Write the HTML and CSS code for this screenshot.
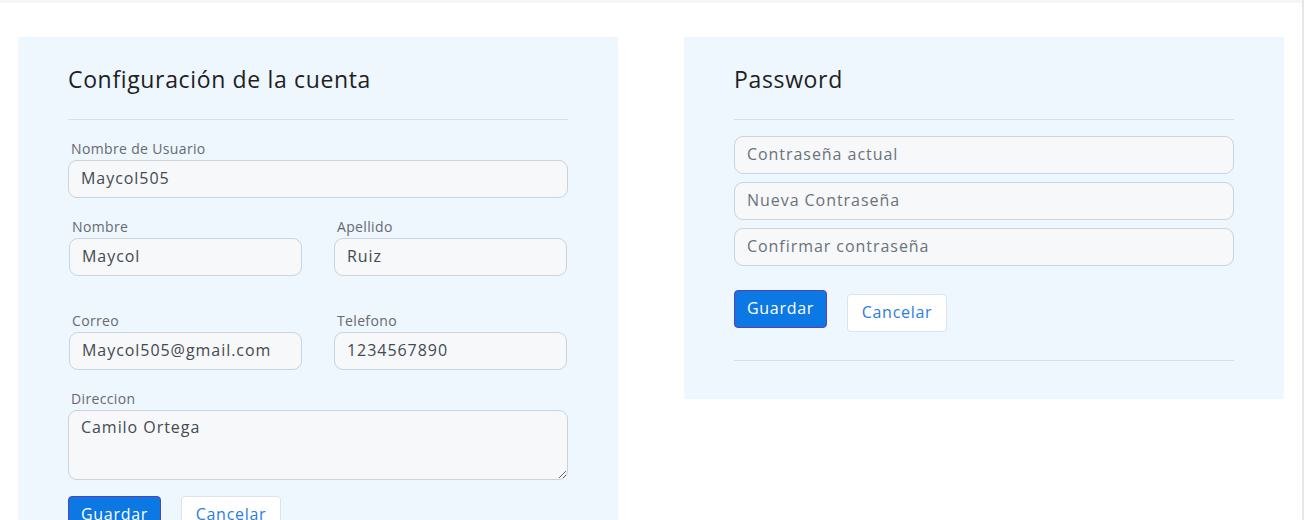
FILE: index.html
```html
<!DOCTYPE html>
<html lang="es">
<head>
<meta charset="utf-8">
<title>Configuración</title>
<link rel="stylesheet" href="styles.css">
</head>
<body>
<div class="page">
  <div class="topband"></div>
  <div class="cards">
    <section class="card card-left">
      <h4 class="card-title">Configuración de la cuenta</h4>
      <hr class="divider">
      <div class="field">
        <label class="label">Nombre de Usuario</label>
        <input class="input" type="text" value="Maycol505">
      </div>
      <div class="row row-first">
        <div class="field">
          <label class="label">Nombre</label>
          <input class="input" type="text" value="Maycol">
        </div>
        <div class="field">
          <label class="label">Apellido</label>
          <input class="input" type="text" value="Ruiz">
        </div>
      </div>
      <div class="row row-second">
        <div class="field">
          <label class="label">Correo</label>
          <input class="input" type="text" value="Maycol505@gmail.com">
        </div>
        <div class="field">
          <label class="label">Telefono</label>
          <input class="input" type="text" value="1234567890">
        </div>
      </div>
      <div class="field field-dir">
        <label class="label">Direccion</label>
        <textarea class="input textarea">Camilo Ortega</textarea>
      </div>
      <div class="actions actions-left">
        <button class="btn btn-primary">Guardar</button>
        <button class="btn btn-light">Cancelar</button>
      </div>
    </section>
    <section class="card card-right">
      <h4 class="card-title">Password</h4>
      <hr class="divider">
      <div class="pw-fields">
        <input class="input" type="password" placeholder="Contraseña actual">
        <input class="input" type="password" placeholder="Nueva Contraseña">
        <input class="input" type="password" placeholder="Confirmar contraseña">
      </div>
      <div class="actions actions-right">
        <button class="btn btn-primary">Guardar</button>
        <button class="btn btn-light btn-offset">Cancelar</button>
      </div>
      <hr class="divider divider-bottom">
    </section>
  </div>
</div>
</body>
</html>
```
FILE: styles.css
```css
* { box-sizing: border-box; }
html, body { margin: 0; padding: 0; background: #fff; }
body {
  font-family: "Open Sans", "Liberation Sans", sans-serif;
  color: #222;
  overflow: hidden;
}
.page {
  width: 1304px;
  height: 520px;
  border-right: 2px solid #e6e7e9;
}
.topband {
  height: 3px;
  background: #f5f6f8;
}
.cards {
  display: flex;
  align-items: flex-start;
  gap: 66px;
  padding: 34px 0 0 18px;
}
.card {
  width: 600px;
  background: #eef6fe;
  padding: 26px 50px 0 50px;
}
.card-left { height: 500px; }
.card-right { padding-bottom: 38px; }
.card-title {
  margin: 0;
  font-size: 23px;
  line-height: 32px;
  font-weight: 400;
  color: #1f1f1f;
  letter-spacing: 0.65px;
}
.divider {
  margin: 24px 0 0 0;
  border: 0;
  border-top: 1px solid #d9dfe6;
  height: 0;
}
.field { display: flex; flex-direction: column; }
.label {
  display: block;
  font-size: 14px;
  line-height: 17px;
  padding-bottom: 3px;
  font-weight: 500;
  letter-spacing: 0.35px;
  color: #666a70;
  padding-left: 3px;
}
.card-left > .field:first-of-type { margin-top: 20px; }
.input {
  width: 100%;
  height: 38px;
  border: 1px solid #cdd3da;
  border-radius: 9px;
  background: #f6f8fa;
  font-family: inherit;
  font-size: 16px;
  letter-spacing: 0.95px;
  color: #444a50;
  padding: 0 12px 2px 12px;
  outline: none;
}
.input::placeholder { color: #6c727a; }
.row {
  display: grid;
  grid-template-columns: 1fr 1fr;
  column-gap: 32px;
  padding: 0 1px;
}
.row-first { margin-top: 20px; }
.row-second { margin-top: 36px; }
.field-dir { margin-top: 20px; }
.textarea {
  height: 70px;
  padding: 6px 12px;
  line-height: 20px;
  resize: vertical;
}
.actions {
  display: flex;
  align-items: flex-start;
  gap: 20px;
}
.actions-left { margin-top: 16px; }
.actions-right { margin-top: 24px; }
.pw-fields {
  display: flex;
  flex-direction: column;
  gap: 8px;
  margin-top: 16px;
}
.btn {
  font-family: inherit;
  font-size: 16px;
  letter-spacing: 0.7px;
  height: 38px;
  border-radius: 4px;
  padding: 0 0 2px 0;
  cursor: pointer;
}
.btn-primary {
  width: 93px;
  background: #0b78e3;
  color: #fff;
  border: 1px solid #5a3fb8;
}
.btn-light {
  width: 100px;
  background: #fff;
  color: #2b7de0;
  border: 1px solid #dde3ea;
}
.btn-offset { margin-top: 4px; }
.divider-bottom { margin-top: 28px; }
```
